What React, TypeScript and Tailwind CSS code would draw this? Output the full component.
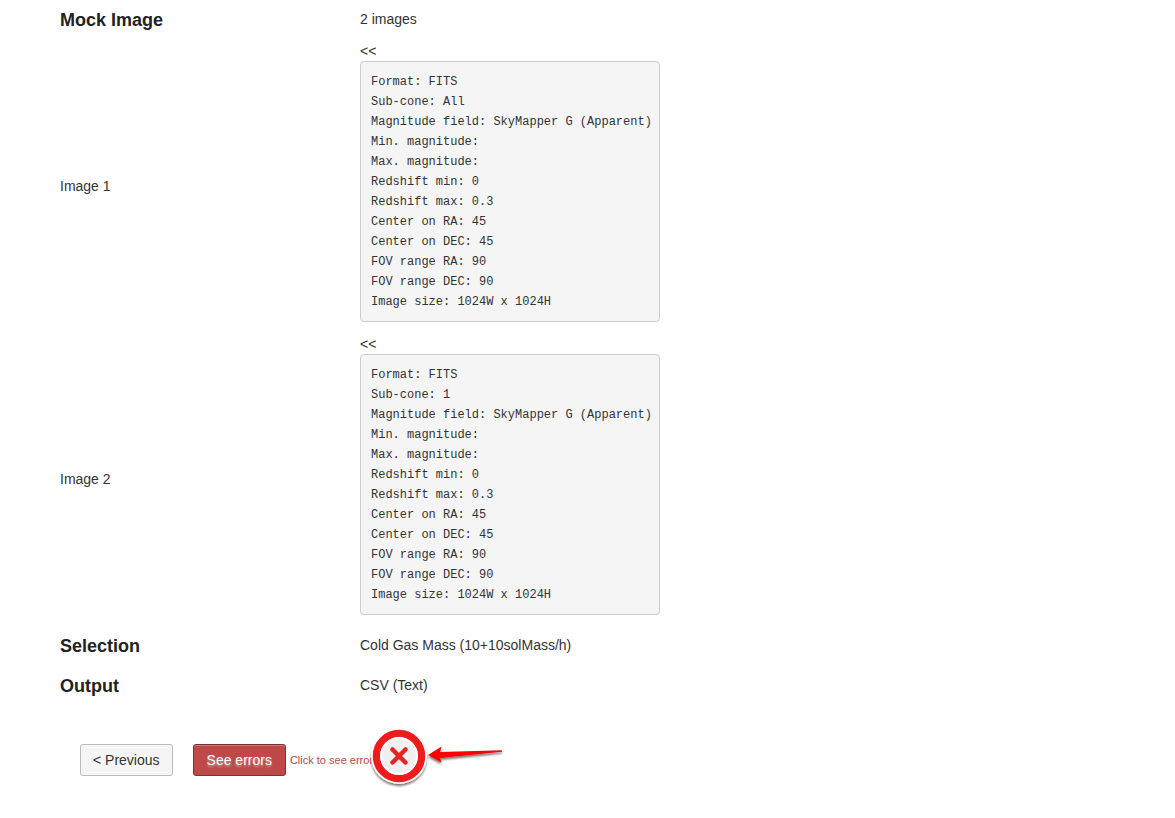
type MockImage = { name: string; subCone: string };

const images: MockImage[] = [
  { name: "Image 1", subCone: "All" },
  { name: "Image 2", subCone: "1" },
];

function describe(image: MockImage): string {
  return [
    "Format: FITS",
    `Sub-cone: ${image.subCone}`,
    "Magnitude field: SkyMapper G (Apparent)",
    "Min. magnitude:",
    "Max. magnitude:",
    "Redshift min: 0",
    "Redshift max: 0.3",
    "Center on RA: 45",
    "Center on DEC: 45",
    "FOV range RA: 90",
    "FOV range DEC: 90",
    "Image size: 1024W x 1024H",
  ].join("\n");
}

function SummaryRow({ title, value }: { title: string; value: string }) {
  return (
    <div className="flex">
      <h4 className="w-[300px] shrink-0 text-lg leading-[22px] font-bold text-[#222]">{title}</h4>
      <p>{value}</p>
    </div>
  );
}

function ImageRow({ image }: { image: MockImage }) {
  return (
    <div className="flex items-center">
      <div className="w-[300px] shrink-0 pt-2">{image.name}</div>
      <div className="w-[300px]">
        <a href="#" className="block">
          &lt;&lt;
        </a>
        <pre className="rounded border border-[#ccc] bg-[#f5f5f5] px-2.5 pt-2.5 pb-[9px] font-['Liberation_Mono',monospace] text-xs leading-5">
          {describe(image)}
        </pre>
      </div>
    </div>
  );
}

function ErrorMarker() {
  return (
    <svg
      className="absolute -top-[26px] left-[77px] h-[68px] w-[140px]"
      viewBox="0 0 140 68"
      aria-hidden="true"
    >
      <defs>
        <filter id="shadow" x="-20%" y="-50%" width="140%" height="220%">
          <feDropShadow dx="0" dy="2" stdDeviation="1.3" floodColor="#000" floodOpacity="0.55" />
        </filter>
      </defs>
      <g filter="url(#shadow)">
        <circle cx="32" cy="32" r="28" fill="#fff" />
      </g>
      <circle cx="32" cy="32" r="22.500" fill="#f0f0f0" stroke="#ee1c1c" strokeWidth="7.500" />
      <circle cx="32" cy="32" r="18" fill="none" stroke="#fff" strokeWidth="2" />
      <path
        d="M25.500 25.500L38.500 38.500M38.500 25.500L25.500 38.500"
        stroke="#e32424"
        strokeWidth="4.500"
        strokeLinecap="round"
      />
      <path
        d="M61 31L74.500 22.500L73 28L135 26.200L135 27.800L73 34L74.500 38.500Z"
        fill="#f00"
        filter="url(#shadow)"
      />
    </svg>
  );
}

export default function App() {
  return (
    <main className="px-[60px] pt-[9px] pb-10 font-['Liberation_Sans',Arial,sans-serif] text-sm leading-5 text-[#333]">
      <SummaryRow title="Mock Image" value="2 images" />
      <div className="mt-2.5 mb-5 flex flex-col gap-3">
        {images.map((image) => (
          <ImageRow key={image.name} image={image} />
        ))}
      </div>
      <div className="flex flex-col gap-[18px]">
        <SummaryRow title="Selection" value="Cold Gas Mass (10+10solMass/h)" />
        <SummaryRow title="Output" value="CSV (Text)" />
      </div>
      <div className="mt-[47px] flex items-center px-5">
        <button
          type="button"
          className="h-8 rounded-[3px] border border-[#bbb] bg-[#f5f5f5] px-3 text-sm"
        >
          &lt; Previous
        </button>
        <button
          type="button"
          className="ml-5 h-8 rounded-[3px] border border-[#7f3030] bg-[#bd4a48] px-[13px] text-sm text-white shadow-[inset_0_1px_0_#d07b79] [text-shadow:0_2px_2px_rgba(255,255,255,0.4)]"
        >
          See errors
        </button>
        <div className="relative ml-1 text-[11px] text-[#b94a48]">
          <span>Click to see error</span>
          <ErrorMarker />
        </div>
      </div>
    </main>
  );
}
